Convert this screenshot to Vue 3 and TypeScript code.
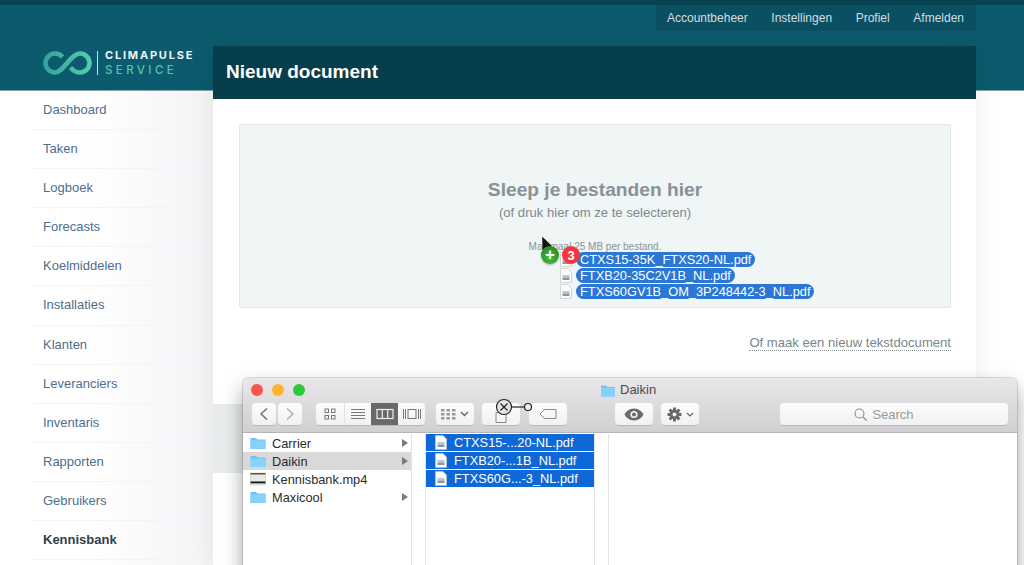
<script setup lang="ts">
const navItems: string[] = ['Accountbeheer', 'Instellingen', 'Profiel', 'Afmelden']
const menu: string[] = ['Dashboard', 'Taken', 'Logboek', 'Forecasts', 'Koelmiddelen', 'Installaties', 'Klanten', 'Leveranciers', 'Inventaris', 'Rapporten', 'Gebruikers', 'Kennisbank']
const dragged: string[] = ['CTXS15-35K_FTXS20-NL.pdf', 'FTXB20-35C2V1B_NL.pdf', 'FTXS60GV1B_OM_3P248442-3_NL.pdf']
const files: string[] = ['CTXS15-...20-NL.pdf', 'FTXB20-...1B_NL.pdf', 'FTXS60G...-3_NL.pdf']
const folders = [
  { name: 'Carrier', kind: 'folder', arrow: true, active: false },
  { name: 'Daikin', kind: 'folder', arrow: true, active: true },
  { name: 'Kennisbank.mp4', kind: 'video', arrow: false, active: false },
  { name: 'Maxicool', kind: 'folder', arrow: true, active: false }
]
</script>

<template>
  <div class="page">
    <div class="topline"></div>
    <div class="band"></div>
    <div class="logo">
      <svg width="50" height="24" viewBox="0 0 50 24" fill="none">
        <defs>
          <linearGradient id="lg" x1="0" x2="1" y1="0" y2="0">
            <stop offset="0" stop-color="#35a39c" />
            <stop offset="1" stop-color="#56c9b2" />
          </linearGradient>
        </defs>
        <path d="M19.500 6C17.500 3.500 15 2.500 12 2.500 6.800 2.500 2.500 6.800 2.500 12s4.300 9.500 9.500 9.500C20 21.500 28 2.500 37 2.500c5.200 0 9.500 4.300 9.500 9.500s-4.300 9.500-9.500 9.500c-4 0-7-2-9.500-5" stroke="url(#lg)" stroke-width="4.600" />
      </svg>
      <span class="logo-rule"></span>
      <span class="logo-text">
        <span class="logo-a">CLIMAPULSE</span>
        <span class="logo-b">SERVICE</span>
      </span>
    </div>
    <nav class="nav">
      <a v-for="n in navItems" :key="n">{{ n }}</a>
    </nav>

    <aside class="side">
      <a v-for="m in menu" :key="m" :class="{ current: m === 'Kennisbank' }">{{ m }}</a>
    </aside>

    <main class="main">
      <h1>Nieuw document</h1>
      <div class="content">
        <div class="drop">
          <div class="drop-title">Sleep je bestanden hier</div>
          <div class="drop-sub">(of druk hier om ze te selecteren)</div>
          <div class="drop-max">Maximaal 25 MB per bestand.</div>
        </div>
        <div class="alt"><a>Of maak een nieuw tekstdocument</a></div>
      </div>
    </main>

    <div class="shade"></div>

    <section class="finder">
      <header class="chrome">
        <div class="titlerow">
          <span class="light red"></span><span class="light yellow"></span><span class="light green"></span>
          <span class="wintitle">
            <svg width="16" height="13" viewBox="0 0 16 13"><path d="M1 1.500h5l1.500 1.500H15v9.500H1z" fill="#6fc6f5" /><path d="M1 4h14v8.500H1z" fill="#83d2fa" /></svg>
            Daikin
          </span>
        </div>
        <div class="tools">
          <div class="btn w24"><svg width="10" height="14" viewBox="0 0 10 14" fill="none"><path d="M8 1.500 2 7l6 5.500" stroke="#666" stroke-width="1.300" /></svg></div>
          <div class="btn w24 ml2"><svg width="10" height="14" viewBox="0 0 10 14" fill="none"><path d="M2 1.500 8 7l-6 5.500" stroke="#aaa" stroke-width="1.300" /></svg></div>
          <div class="btn group ml14">
            <span class="seg s1">
              <svg width="14" height="14" viewBox="0 0 14 14" fill="none" stroke="#777"><rect x="2" y="2" width="3.500" height="3.500" /><rect x="8.500" y="2" width="3.500" height="3.500" /><rect x="2" y="8.500" width="3.500" height="3.500" /><rect x="8.500" y="8.500" width="3.500" height="3.500" /></svg>
            </span>
            <span class="seg s2">
              <svg width="16" height="12" viewBox="0 0 16 12" stroke="#777"><path d="M1 1.500h14M1 4.500h14M1 7.500h14M1 10.500h14" /></svg>
            </span>
            <span class="seg s3">
              <svg width="18" height="12" viewBox="0 0 18 12" fill="none" stroke="#eee" stroke-width="1.200"><rect x="1" y="1.500" width="16" height="9" /><path d="M6.300 1.500v9M11.700 1.500v9" /></svg>
            </span>
            <span class="seg s4">
              <svg width="20" height="12" viewBox="0 0 20 12" fill="none" stroke="#777"><rect x="6" y="1.500" width="8" height="9" /><path d="M1.500 1v10M3.500 1v10M16.500 1v10M18.500 1v10" /></svg>
            </span>
          </div>
          <div class="btn w38 ml11">
            <svg width="15" height="13" viewBox="0 0 15 13" fill="#999"><rect x="0" y="1" width="3.500" height="2.500" /><rect x="5.500" y="1" width="3.500" height="2.500" /><rect x="11" y="1" width="3.500" height="2.500" /><rect x="0" y="5" width="3.500" height="2.500" /><rect x="5.500" y="5" width="3.500" height="2.500" /><rect x="11" y="5" width="3.500" height="2.500" /><rect x="0" y="9" width="3.500" height="2.500" /><rect x="5.500" y="9" width="3.500" height="2.500" /><rect x="11" y="9" width="3.500" height="2.500" /></svg>
            <svg class="chev" width="9" height="6" viewBox="0 0 9 6" fill="none"><path d="M1 1l3.500 3.500L8 1" stroke="#666" stroke-width="1.400" /></svg>
          </div>
          <div class="btn w38 ml8 share"><svg width="12" height="11" viewBox="0 0 12 11" fill="none"><path d="M1 .5h10v10H1z" stroke="#888" /></svg></div>
          <div class="btn w38 ml9"><svg width="18" height="12" viewBox="0 0 18 12" fill="none"><path d="M5.500 1.500H17v9H5.500L1 6z" stroke="#888" /></svg></div>
          <div class="btn w38 ml48"><svg width="20" height="13" viewBox="0 0 20 13"><path d="M10 .5C5 .5 1.800 4 .5 6.500 1.800 9 5 12.500 10 12.500S18.200 9 19.500 6.500C18.200 4 15 .5 10 .5z" fill="#6a6a6a" /><circle cx="10" cy="6.500" r="3.600" fill="#f5f5f5" /><circle cx="10" cy="6.500" r="2" fill="#6a6a6a" /></svg></div>
          <div class="btn w38 ml8">
            <svg width="15" height="15" viewBox="0 0 15 15"><g fill="#6a6a6a"><circle cx="7.500" cy="7.500" r="5" /><rect x="6" y="0.500" width="3" height="14" /><rect x="0.500" y="6" width="14" height="3" /><rect x="6" y="0.500" width="3" height="14" transform="rotate(45 7.500 7.500)" /><rect x="6" y="0.500" width="3" height="14" transform="rotate(-45 7.500 7.500)" /></g><circle cx="7.500" cy="7.500" r="2" fill="#f3f3f3" /></svg>
            <svg class="chev" width="8" height="5" viewBox="0 0 8 5" fill="none"><path d="M1 1l3 3 3-3" stroke="#666" stroke-width="1.200" /></svg>
          </div>
          <div class="btn search">
            <svg width="13" height="13" viewBox="0 0 13 13" fill="none" stroke="#888" stroke-width="1.100"><circle cx="5.500" cy="5.500" r="4.500" /><path d="M9 9l3.500 3.500" /></svg>
            Search
          </div>
        </div>
      </header>
      <div class="columns">
        <div class="col first">
          <div v-for="f in folders" :key="f.name" class="row" :class="{ active: f.active }">
            <svg v-if="f.kind === 'folder'" class="ficon" width="16" height="14" viewBox="0 0 16 14"><path d="M.5 2h5.500l1.500 1.500h8V13H.5z" fill="#6cc4f4" /><path d="M.5 4.500h15V13H.5z" fill="#86d2fb" /></svg>
            <svg v-else class="ficon" width="16" height="14" viewBox="0 0 16 14"><rect x=".5" y="1" width="15" height="12" fill="#e8e8e8" stroke="#bbb" stroke-width=".5" /><rect x=".5" y="1" width="15" height="1.500" fill="#555" /><rect x=".5" y="9.500" width="15" height="1.800" fill="#111" /></svg>
            <span class="rname">{{ f.name }}</span>
            <i v-if="f.arrow" class="tri"></i>
          </div>
        </div>
        <div class="gutter"></div>
        <div class="col second">
          <div v-for="f in files" :key="f" class="row sel">
            <svg class="doc" width="12" height="15" viewBox="0 0 12 15"><path d="M.5.5h7.500l3.500 3.500v10.500H.5z" fill="#fff" stroke="#c4c4c4" stroke-width=".7" /><rect x="2.500" y="7" width="7" height="2.500" fill="#b5cadf" /><rect x="2.500" y="9.500" width="7" height="2.500" fill="#8a96a2" /></svg>
            <span class="rname">{{ f }}</span>
          </div>
        </div>
        <div class="gutter"></div>
        <div class="col third"></div>
      </div>
    </section>

    <div class="drag">
      <svg class="cursor" width="14" height="20" viewBox="0 0 14 20"><path d="M1 1v15l3.600-3.400 2.600 6 2.400-1-2.600-5.800H12z" fill="#111" stroke="#fff" stroke-width=".6" /></svg>
      <div class="ghost-list">
        <div v-for="d in dragged" :key="d" class="ghost">
          <svg class="doc" width="12" height="15" viewBox="0 0 12 15"><path d="M.5.5h7.500l3.500 3.500v10.500H.5z" fill="#fbfbfb" stroke="#c4c4c4" stroke-width=".7" /><rect x="2.500" y="7" width="7" height="2.500" fill="#b5cadf" /><rect x="2.500" y="9.500" width="7" height="2.500" fill="#8a96a2" /></svg>
          <span class="pill">{{ d }}</span>
        </div>
      </div>
      <span class="plus">+</span>
      <span class="count">3</span>
    </div>

    <svg class="nodrop" width="40" height="20" viewBox="0 0 40 20" fill="none">
      <circle cx="9" cy="10" r="7.500" fill="#e8e6e8" stroke="#222" stroke-width="1.200" />
      <path d="M5.500 6.500l7 7M12.500 6.500l-7 7" stroke="#222" stroke-width="1.200" />
      <path d="M16.500 10h13" stroke="#222" stroke-width="1.200" />
      <circle cx="33" cy="10" r="3.500" fill="#eee" stroke="#222" stroke-width="1.200" />
    </svg>
  </div>
</template>

<style>
html, body { margin: 0; background: #fff; }
</style>

<style scoped>
.page {
  position: relative;
  width: 1024px;
  height: 565px;
  overflow: hidden;
  display: grid;
  grid-template-columns: 213px 763px 48px;
  grid-template-rows: 5px 41px 45px 1fr;
  font-family: "Liberation Sans", Arial, sans-serif;
  background: #fff;
}
.topline { grid-column: 1 / 4; grid-row: 1; background: #06424f; }
.band { grid-column: 1 / 4; grid-row: 2 / 4; background: #0c5a6d; border-bottom: 1px solid #7fa6b0; box-sizing: border-box; }
.logo {
  grid-column: 1; grid-row: 2 / 4; align-self: end;
  display: flex; align-items: center;
  padding: 0 0 14px 43px;
}
.logo-rule { width: 1px; height: 24px; background: #cfe0e2; margin: 0 7px 0 4px; }
.logo-text { display: flex; flex-direction: column; line-height: 13px; }
.logo-a { font-family: Inter, sans-serif; font-weight: 700; font-size: 11px; letter-spacing: 1.8px; color: #f0f6f6; }
.logo-b { font-family: Inter, sans-serif; font-weight: 500; font-size: 11.500px; letter-spacing: 3.400px; color: #52c4b2; margin-top: 2px; }

.nav {
  grid-column: 2; grid-row: 2; justify-self: end; align-self: start;
  display: flex; height: 26px; width: 320px; box-sizing: border-box;
  padding: 0 12px 0 11px; justify-content: space-between; align-items: center;
  background: #0b5062;
}
.nav a { font-size: 12px; color: #d3dde0; }

.side {
  grid-column: 1; grid-row: 4;
  display: flex; flex-direction: column;
  padding-left: 33px;
  background: linear-gradient(90deg, #fff 40%, #f4f4f7 100%);
}
.side a {
  height: 38.100px; line-height: 38px; flex: none;
  padding-left: 10px;
  border-bottom: 1px solid #f3f4fb;
  font-size: 13px; color: #4f6d8e;
}
.side a.current { font-weight: 700; color: #2f3f4f; }

.main { grid-column: 2; grid-row: 3 / 5; display: flex; flex-direction: column; box-shadow: 0 0 24px rgba(0,0,0,.07); z-index: 1; }
h1 {
  margin: 0; height: 53px; line-height: 51px; padding-left: 13px;
  background: #063e4b; color: #fff; font-size: 19px; font-weight: 700;
  box-sizing: border-box;
}
.content { flex: 1; background: #fff; padding: 25px 25px 0 26px; }
.drop {
  height: 184px; box-sizing: border-box;
  background: #f0f5f5; border: 1px dotted #d4d6d6; border-radius: 3px;
  display: flex; flex-direction: column; align-items: center;
  padding-top: 53px;
}
.drop-title { font-size: 19.200px; font-weight: 700; color: #889298; line-height: 23px; }
.drop-sub { font-size: 13.100px; color: #7f898e; line-height: 16px; margin-top: 4px; }
.drop-max { font-size: 10px; color: #8b9396; margin-top: 20px; line-height: 12px; }
.alt { text-align: right; margin-top: 25px; }
.alt a { font-size: 13.100px; color: #7a858b; border-bottom: 1px dotted #8a9499; }

.shade {
  position: absolute; left: 213px; top: 404px; width: 30px; height: 69px;
  background: rgba(120, 135, 135, .16); z-index: 2;
}
.finder {
  position: absolute; left: 243px; top: 378px; width: 774px; height: 200px; z-index: 3;
  border-radius: 5px 5px 0 0; overflow: hidden;
  box-shadow: 0 0 0 1px rgba(0,0,0,.12), 0 10px 20px rgba(0,0,0,.36);
  background: #fff;
}
.chrome {
  height: 55px; box-sizing: border-box;
  background: linear-gradient(#e9e7e9, #d1cfd1);
  border-bottom: 1px solid #b5b5b5;
}
.titlerow { position: relative; height: 24px; display: flex; align-items: center; padding-left: 8px; gap: 9px; }
.light { width: 12px; height: 12px; border-radius: 50%; }
.red { background: #f9544d; }
.yellow { background: #fdb42f; }
.green { background: #2ec840; }
.wintitle {
  position: absolute; left: 357px; top: 4px; display: flex; align-items: center; gap: 4px;
  font-size: 13px; color: #4a4a4a; line-height: 16px;
}
.tools { display: flex; padding: 1px 0 0 9px; }
.btn {
  height: 22px; background: linear-gradient(#fdfdfd, #f1f1f1); border-radius: 4px;
  box-shadow: 0 1px 0 rgba(0,0,0,.12);
  display: flex; align-items: center; justify-content: center; box-sizing: border-box;
}
.w24 { width: 24px; }
.w38 { width: 38px; }
.ml2 { margin-left: 2px; }
.ml14 { margin-left: 14px; }
.ml11 { margin-left: 11px; }
.ml8 { margin-left: 8px; }
.ml9 { margin-left: 9px; }
.ml48 { margin-left: 48px; }
.chev { margin-left: 4px; }
.share svg { margin-top: 6px; }
.group { width: 109px; overflow: hidden; }
.seg { height: 22px; display: flex; align-items: center; justify-content: center; }
.s1 { width: 28px; }
.s2 { width: 27px; border-left: 1px solid #e2e2e2; box-sizing: border-box; }
.s3 { width: 27px; background: #696969; }
.s4 { width: 27px; }
.search {
  width: 228px; margin-left: 81px; gap: 5px; padding-right: 20px;
  font-size: 13px; color: #9a9a9a;
}
.columns { display: flex; height: 145px; padding-top: 1px; }
.col { flex: none; }
.first { width: 168px; }
.second { width: 168px; }
.third { flex: 1; }
.gutter { width: 13px; flex: none; border-left: 1px solid #e4e4e4; border-right: 1px solid #e4e4e4; }
.row {
  position: relative; display: flex; align-items: center; height: 18px;
  font-size: 12.800px; color: #2c2c2c; padding-left: 7px;
}
.row.active { background: #d9d9d9; }
.ficon { margin-right: 6px; flex: none; }
.rname { white-space: nowrap; }
.tri {
  position: absolute; right: 3px; top: 5px;
  border-left: 6px solid #7a7a7a; border-top: 4px solid transparent; border-bottom: 4px solid transparent;
}
.row.sel {
  background: #0f68d8; color: #fff; height: 17px; margin-bottom: 1px; padding-left: 9px;
}
.row.sel .doc { margin-right: 7px; }

.drag { position: absolute; left: 541px; top: 235px; z-index: 4; width: 290px; height: 70px; }
.cursor { position: absolute; left: 0; top: 0; }
.ghost-list { position: absolute; left: 19px; top: 17px; display: flex; flex-direction: column; gap: 1px; }
.ghost { display: flex; align-items: center; height: 15px; gap: 4px; }
.ghost .doc { flex: none; }
.pill {
  background: #2a77d6; color: #fff; font-size: 12.800px; line-height: 15px;
  padding: 0 4px; border-radius: 8px; white-space: nowrap;
}
.plus, .count {
  position: absolute; top: 11px; width: 18px; height: 18px; border-radius: 50%;
  display: flex; align-items: center; justify-content: center; color: #fff; font-weight: 700;
}
.plus { left: 0; background: radial-gradient(circle at 50% 65%, #45c23a, #167a1c); font-size: 17px; box-shadow: 0 1px 2px rgba(0,0,0,.3); }
.count { left: 21px; background: #f2353f; font-size: 13px; }
.nodrop { position: absolute; left: 495px; top: 397px; z-index: 5; }
</style>
